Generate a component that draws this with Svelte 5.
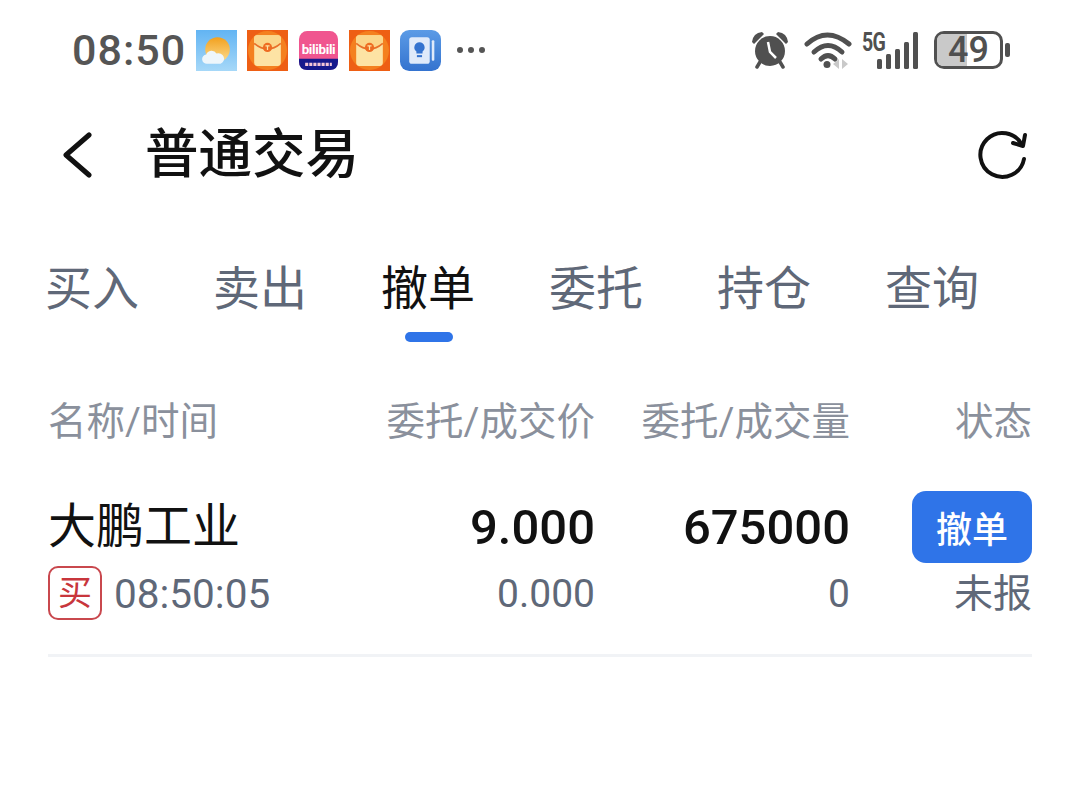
<script>
  const tabs = ['买入', '卖出', '撤单', '委托', '持仓', '查询'];
  const activeTab = '撤单';
  const cols = ['委托/成交价', '委托/成交量', '状态'];
  const bars = [10, 15, 20, 27, 37];
</script>

{#snippet envelope()}
  <svg class="app-icon" viewBox="0 0 40 40">
    <rect width="40" height="40" fill="#ee5f14" />
    <circle cx="20" cy="20" r="19" fill="#f4801f" />
    <rect x="7" y="5" width="26" height="30" rx="3" fill="#fde3a4" />
    <path d="M7 13 Q20 24 33 13 V8 Q33 5 30 5 H10 Q7 5 7 8 Z" fill="#fbd68a" />
    <path d="M7 13 Q20 24 33 13" fill="none" stroke="#e8702a" stroke-width="1.6" />
    <circle cx="20" cy="17" r="4.500" fill="#ee6c22" />
    <path d="M18 15.500 H22 M20 15.500 V19.500" stroke="#fde3a4" stroke-width="1.2" />
  </svg>
{/snippet}

<div class="page">
  <div class="status-bar">
    <span class="time">08:50</span>
    <div class="notif">
      <svg class="app-icon" viewBox="0 0 40 40">
        <defs>
          <linearGradient id="sky" x1="0" y1="0" x2="0" y2="1">
            <stop offset="0" stop-color="#62b4f3" />
            <stop offset="1" stop-color="#a6d8f8" />
          </linearGradient>
          <linearGradient id="sun" x1="0" y1="0" x2="0" y2="1">
            <stop offset="0" stop-color="#f2a01e" />
            <stop offset="1" stop-color="#fbdc8e" />
          </linearGradient>
        </defs>
        <rect width="40" height="40" fill="url(#sky)" />
        <circle cx="21" cy="19" r="12" fill="url(#sun)" />
        <path d="M11 33 a4.500 4.500 0 0 1 -1 -9 a5.500 5.500 0 0 1 10 -1 a5 5 0 0 1 4 10 Z" fill="#eef6fb" />
      </svg>
      {@render envelope()}
      <svg class="app-icon small" viewBox="0 0 38 38">
        <rect width="38" height="38" rx="8" fill="#f0558f" />
        <path d="M0 27 H38 V30 Q38 38 30 38 H8 Q0 38 0 30 Z" fill="#16198c" />
        <text x="19" y="22" text-anchor="middle" class="bili">bilibili</text>
        <path d="M6 32.500 H32" stroke="#f4c6d6" stroke-width="3" stroke-dasharray="3 1" />
      </svg>
      {@render envelope()}
      <svg class="app-icon" viewBox="0 0 40 40">
        <defs>
          <linearGradient id="note" x1="0" y1="0" x2="0" y2="1">
            <stop offset="0" stop-color="#5b9be6" />
            <stop offset="1" stop-color="#3473cf" />
          </linearGradient>
        </defs>
        <rect width="40" height="40" rx="9" fill="url(#note)" />
        <rect x="9" y="7" width="20" height="26" rx="2.500" fill="#dfeafa" />
        <rect x="31" y="10" width="2.500" height="20" rx="1" fill="#dfeafa" />
        <path d="M19 12 a5 5 0 0 1 3 9 v2 h-6 v-2 a5 5 0 0 1 3 -9 Z" fill="#3473cf" />
        <rect x="16.500" y="24.500" width="5" height="2" fill="#3473cf" />
      </svg>
      <span class="dots"><i></i><i></i><i></i></span>
    </div>
    <div class="sys">
      <svg class="alarm" viewBox="0 0 38 38" width="38" height="38">
        <circle cx="19" cy="20" r="15" fill="#505050" />
        <path d="M1 11 Q2 2 11 1 L13 3 L3 13 Z M37 11 Q36 2 27 1 L25 3 L35 13 Z" fill="#505050" />
        <path d="M9 31 L6 36 M29 31 L32 36" stroke="#505050" stroke-width="3.500" stroke-linecap="round" />
        <path d="M17 11 L19 21 L25 27" fill="none" stroke="#fff" stroke-width="2.500" />
      </svg>
      <svg class="wifi" viewBox="0 0 48 38" width="48" height="38">
        <path d="M3 13 Q23 -5 45 13" fill="none" stroke="#505050" stroke-width="5" stroke-linecap="round" />
        <path d="M10 21 Q24 8 38 21" fill="none" stroke="#505050" stroke-width="5" stroke-linecap="round" />
        <path d="M17 28 Q24 21 31 28" fill="none" stroke="#505050" stroke-width="5" stroke-linecap="round" />
        <circle cx="23" cy="33.500" r="3.500" fill="#505050" />
        <path d="M35 28 V38 L29 33 Z M38 28 V38 L44 33 Z" fill="#c9c9c9" />
      </svg>
      <div class="signal">
        <span class="five-g">5G</span>
        <span class="bars">
          {#each bars as h}
            <i style="height: {h}px"></i>
          {/each}
        </span>
      </div>
      <div class="battery">
        <div class="shell">
          <span class="fill"></span>
          <span class="level">49</span>
        </div>
        <span class="cap"></span>
      </div>
    </div>
  </div>

  <header class="top">
    <div class="title-group">
      <svg class="back" viewBox="0 0 30 46" width="30" height="46">
        <path d="M27 3 L4 23 L27 43" fill="none" stroke="#111" stroke-width="5" stroke-linecap="round" stroke-linejoin="round" />
      </svg>
      <h1>普通交易</h1>
    </div>
    <svg class="refresh" viewBox="0 0 50 50" width="50" height="50">
      <path d="M46 29 A22 22 0 1 1 44 15" fill="none" stroke="#111" stroke-width="4" stroke-linecap="round" />
      <path d="M47 5 L45 16 L35 13" fill="none" stroke="#111" stroke-width="4" stroke-linecap="round" stroke-linejoin="round" />
    </svg>
  </header>

  <nav class="tabs">
    {#each tabs as tab}
      <div class="tab" class:active={tab === activeTab}>{tab}</div>
    {/each}
  </nav>

  <div class="table">
    <div class="head">
      <span class="left">名称/时间</span>
      {#each cols as col}
        <span>{col}</span>
      {/each}
    </div>

    <div class="row">
      <span class="name">大鹏工业</span>
      <span class="num">9.000</span>
      <span class="num">675000</span>
      <div class="act"><button>撤单</button></div>

      <div class="meta">
        <span class="tag">买</span>
        <span class="clock">08:50:05</span>
      </div>
      <span class="sub">0.000</span>
      <span class="sub">0</span>
      <span class="state">未报</span>
    </div>
  </div>
</div>

<style>
  :global(body) {
    background: #fff;
  }

  .page {
    width: 1080px;
    height: 811px;
    overflow: hidden;
    font-family: Roboto, "Noto Sans CJK SC", sans-serif;
    color: #111;
  }

  /* status bar */
  .status-bar {
    display: flex;
    justify-content: space-between;
    align-items: center;
    height: 100px;
    padding: 0 70px 0 72px;
    color: #505050;
  }

  .time {
    font-size: 43px;
    font-weight: 500;
    letter-spacing: 1px;
    line-height: 1;
    color: #555;
  }

  .notif {
    display: flex;
    align-items: center;
    gap: 10px;
    flex: 1;
    margin-left: 10px;
  }

  .app-icon {
    width: 41px;
    height: 41px;
    flex: none;
  }

  .app-icon.small {
    width: 39px;
    height: 39px;
    margin: 0 1px;
  }

  .bili {
    font-family: Roboto, sans-serif;
    font-size: 13px;
    font-weight: 700;
    letter-spacing: -0.3px;
    fill: #fff;
  }

  .dots {
    display: flex;
    gap: 5px;
    margin-left: 6px;
  }

  .dots i {
    width: 6px;
    height: 6px;
    border-radius: 50%;
    background: #555;
  }

  .sys {
    display: flex;
    align-items: center;
  }

  .wifi {
    margin-left: 15px;
  }

  .signal {
    position: relative;
    width: 56px;
    height: 38px;
    margin-left: 10px;
  }

  .five-g {
    position: absolute;
    left: 0;
    top: -1px;
    font-size: 25px;
    line-height: 1;
    font-weight: 700;
    letter-spacing: -1px;
    transform: scaleX(0.78);
    transform-origin: left;
  }

  .bars {
    position: absolute;
    right: 0;
    bottom: 0;
    display: flex;
    align-items: flex-end;
    gap: 4px;
  }

  .bars i {
    width: 5px;
    border-radius: 1.5px;
    background: #505050;
  }

  .battery {
    display: flex;
    align-items: center;
    gap: 2px;
    margin-left: 16px;
  }

  .shell {
    position: relative;
    width: 69px;
    height: 38px;
    box-sizing: border-box;
    border: 3.500px solid #505050;
    border-radius: 10px;
  }

  .fill {
    position: absolute;
    inset: 0 auto 0 0;
    width: 48%;
    border-radius: 6px 0 0 6px;
    background: #c9c9c9;
  }

  .level {
    position: absolute;
    inset: 0;
    display: flex;
    align-items: center;
    justify-content: center;
    font-size: 36px;
    font-weight: 500;
    line-height: 31px;
    color: #505050;
  }

  .cap {
    width: 5px;
    height: 14px;
    border-radius: 2px;
    background: #505050;
  }

  /* header */
  .top {
    display: flex;
    justify-content: space-between;
    align-items: center;
    height: 110px;
    padding: 0 52px 0 62px;
  }

  .title-group {
    display: flex;
    align-items: center;
    gap: 53px;
  }

  h1 {
    margin: 0;
    font-size: 53.500px;
    font-weight: 500;
    line-height: 1;
  }

  /* tabs */
  .tabs {
    display: flex;
    padding-left: 45px;
    margin-top: 44px;
  }

  .tab {
    position: relative;
    width: 168px;
    height: 92px;
    font-size: 47px;
    line-height: 70px;
    color: #5f6878;
    flex: none;
  }

  .tab.active {
    color: #111;
  }

  .tab.active::after {
    content: "";
    position: absolute;
    left: 24px;
    top: 78px;
    width: 48px;
    height: 10px;
    border-radius: 5px;
    background: #2f74e8;
  }

  /* table */
  .table {
    padding: 0 48px;
  }

  .head,
  .row {
    display: grid;
    grid-template-columns: 338px 209px 255px 182px;
    text-align: right;
  }

  .head {
    margin-top: 47px;
    height: 58px;
    align-items: center;
    font-size: 38.500px;
    line-height: 1;
    color: #8a909c;
    white-space: nowrap;
  }

  .left {
    text-align: left;
    padding-left: 0;
  }

  .row {
    margin-top: 40px;
    padding-bottom: 29px;
    border-bottom: 3px solid #f1f3f6;
    grid-template-rows: 72px 62px;
    align-items: center;
  }

  .name {
    text-align: left;
    font-size: 48px;
    line-height: 1;
  }

  .num {
    font-size: 49px;
    font-weight: 500;
    line-height: 1;
  }

  .act {
    display: flex;
    justify-content: flex-end;
  }

  button {
    width: 120px;
    height: 72px;
    padding: 0;
    border: none;
    border-radius: 14px;
    background: #2f74e8;
    color: #fff;
    font: 500 36px Roboto, "Noto Sans CJK SC", sans-serif;
  }

  .meta {
    display: flex;
    align-items: center;
    gap: 12px;
    text-align: left;
  }

  .tag {
    width: 54px;
    height: 54px;
    margin-bottom: 2px;
    box-sizing: border-box;
    border: 2px solid #c9484e;
    border-radius: 10px;
    color: #c8363c;
    font-size: 34px;
    line-height: 50px;
    text-align: center;
  }

  .clock {
    font-size: 40.500px;
    line-height: 1;
    color: #5f6878;
  }

  .sub {
    font-size: 39px;
    line-height: 1;
    color: #5f6878;
  }

  .state {
    font-size: 39px;
    line-height: 1;
    color: #5f6878;
  }
</style>
